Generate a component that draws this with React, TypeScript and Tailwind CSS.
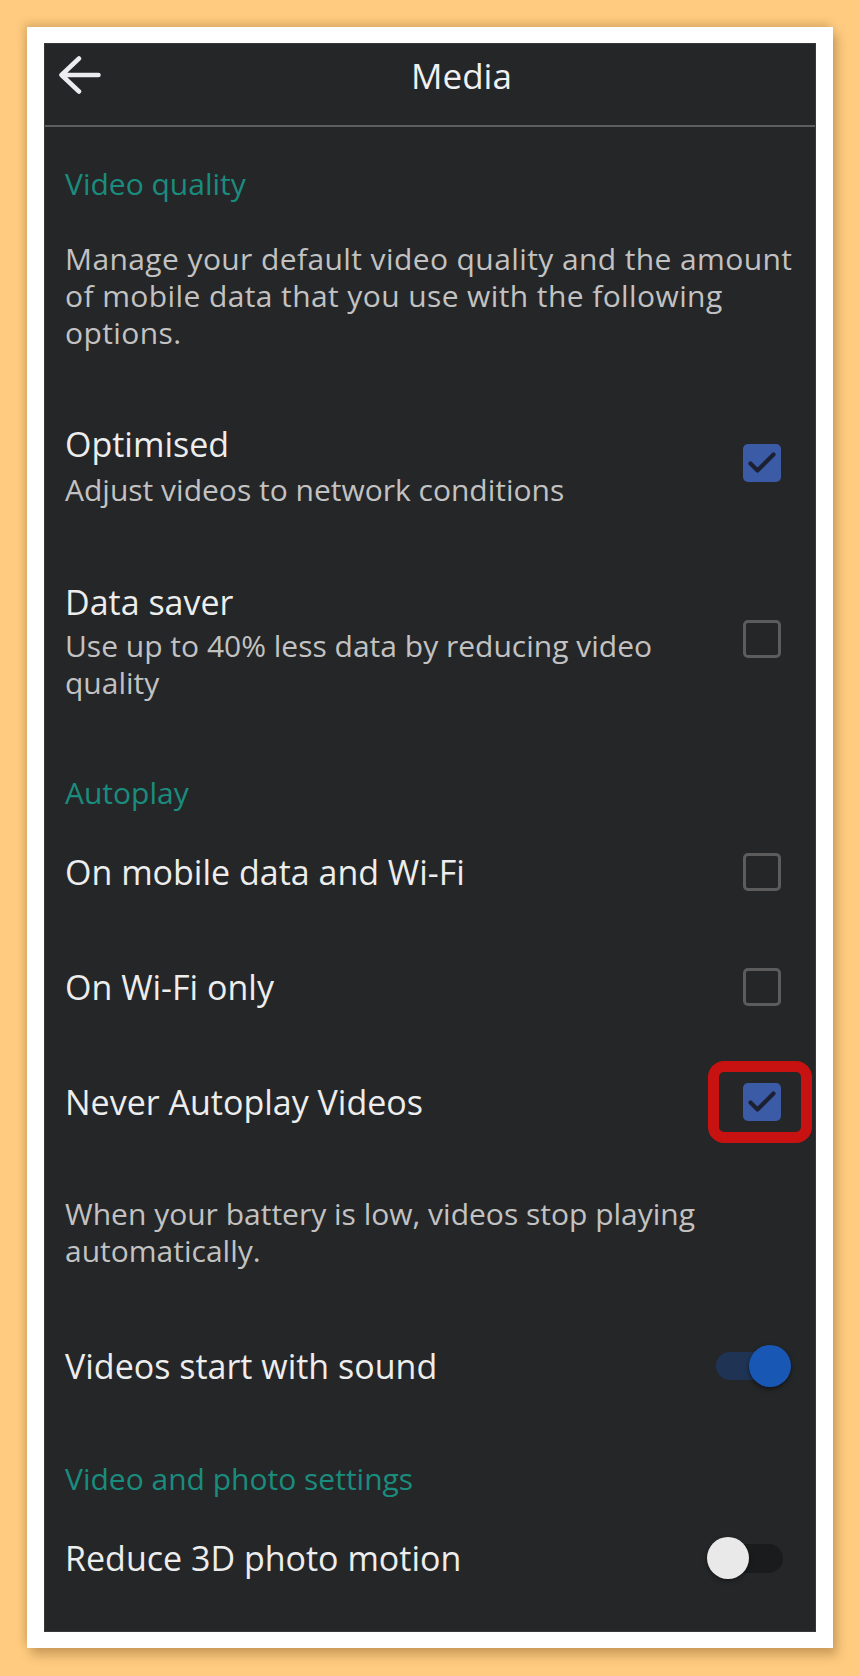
import React from 'react';

const Check: React.FC<{ checked?: boolean }> = ({ checked }) =>
  checked ? (
    <div className="w-[38px] h-[38px] rounded-[5px] bg-[#3c5ba6]">
      <svg width="38" height="38" viewBox="0 0 38 38" fill="none">
        <path
          d="M7.5 19.5L14.5 26.5L30.5 10.5"
          stroke="#1c2030"
          strokeWidth="4.2"
          strokeLinecap="round"
          strokeLinejoin="round"
        />
      </svg>
    </div>
  ) : (
    <div className="w-[38px] h-[38px] rounded-[5px] border-[3px] border-[#5c5c5c]" />
  );

const Toggle: React.FC<{ on?: boolean }> = ({ on }) => (
  <div className="relative w-[84px] h-[42px] -mr-[10px]">
    {on ? (
      <>
        <div className="absolute left-[9px] right-[5px] top-[7px] h-[28px] rounded-full bg-[#1f3454]" />
        <div className="absolute right-0 top-0 w-[42px] h-[42px] rounded-full bg-[#1957b4] shadow-[0_2px_4px_rgba(0,0,0,0.5)]" />
      </>
    ) : (
      <>
        <div className="absolute left-[9px] right-[8px] top-[7px] h-[29px] rounded-full bg-[#1a1b1d]" />
        <div className="absolute left-0 top-0 w-[42px] h-[42px] rounded-full bg-[#e9e9e9] shadow-[0_2px_4px_rgba(0,0,0,0.4)]" />
      </>
    )}
  </div>
);

const Label: React.FC<{ children: React.ReactNode; className?: string }> = ({ children, className }) => (
  <div className={`text-[30px] leading-[37px] text-[#1a8c7d] whitespace-nowrap ${className ?? ''}`}>{children}</div>
);

const Title: React.FC<{ children: React.ReactNode }> = ({ children }) => (
  <div className="text-[34px] leading-[42px] text-[#ededed] whitespace-nowrap">{children}</div>
);

const App: React.FC = () => {
  return (
    <div className="w-[860px] h-[1676px] bg-[#fecb80] overflow-hidden pt-[27px] pl-[27px] font-['Open_Sans',sans-serif]">
      <div className="w-[806px] h-[1621px] bg-white px-[17px] py-[16px] shadow-[4px_7px_10px_rgba(110,70,20,0.35),-3px_-4px_8px_rgba(110,70,20,0.2)]">
        <div className="w-full h-full bg-[#252628] border border-[#38393b] flex flex-col">
          {/* header */}
          <div className="h-[83px] shrink-0 flex items-start pt-[11px] pl-[14px] border-b-2 border-[#5e5e60]">
            <svg width="42" height="38" viewBox="0 0 42 38" fill="none" className="mt-[1px]">
              <path
                d="M20 2.5L2.5 19L20 35.5M2.5 19H39.5"
                stroke="#ececf0"
                strokeWidth="4.5"
                strokeLinecap="round"
                strokeLinejoin="round"
              />
            </svg>
            <div className="ml-[310px] text-[35px] leading-[42px] font-medium text-[#f0f0f2]">Media</div>
          </div>

          <div className="flex flex-col pl-[20px] pr-[34px]">
            <Label className="mt-[38px]">Video quality</Label>
            <p className="mt-[38px] text-[30px] leading-[37px] tracking-[0.4px] text-[#c2c2c2] whitespace-nowrap">
              Manage your default video quality and the amount
              <br />
              of mobile data that you use with the following
              <br />
              options.
            </p>

            <div className="mt-[72px] flex items-center justify-between">
              <div>
                <Title>Optimised</Title>
                <div className="mt-[6px] text-[30px] leading-[37px] text-[#c2c2c2] whitespace-nowrap">
                  Adjust videos to network conditions
                </div>
              </div>
              <div className="mb-[5px]">
                <Check checked />
              </div>
            </div>

            <div className="mt-[73px] flex items-center justify-between">
              <div>
                <Title>Data saver</Title>
                <div className="mt-[4px] text-[30px] leading-[37px] text-[#c2c2c2] whitespace-nowrap">
                  Use up to 40% less data by reducing video
                  <br />
                  quality
                </div>
              </div>
              <div className="mb-[5px]">
                <Check />
              </div>
            </div>

            <Label className="mt-[73px]">Autoplay</Label>

            <div className="mt-[40px] flex items-center justify-between">
              <Title>On mobile data and Wi-Fi</Title>
              <Check />
            </div>

            <div className="mt-[73px] flex items-center justify-between">
              <Title>On Wi-Fi only</Title>
              <Check />
            </div>

            <div className="mt-[73px] flex items-center justify-between">
              <Title>Never Autoplay Videos</Title>
              <div className="relative">
                <Check checked />
                <span className="absolute -left-[35px] -right-[31px] -top-[22px] -bottom-[22px] border-[11px] border-[#c81212] rounded-[16px]" />
              </div>
            </div>

            <p className="mt-[72px] text-[30px] leading-[37px] text-[#c2c2c2] whitespace-nowrap">
              When your battery is low, videos stop playing
              <br />
              automatically.
            </p>

            <div className="mt-[76px] flex items-center justify-between">
              <Title>Videos start with sound</Title>
              <Toggle on />
            </div>

            <Label className="mt-[73px]">Video and photo settings</Label>

            <div className="mt-[40px] flex items-center justify-between">
              <Title>Reduce 3D photo motion</Title>
              <Toggle />
            </div>
          </div>
        </div>
      </div>
    </div>
  );
};

export default App;
